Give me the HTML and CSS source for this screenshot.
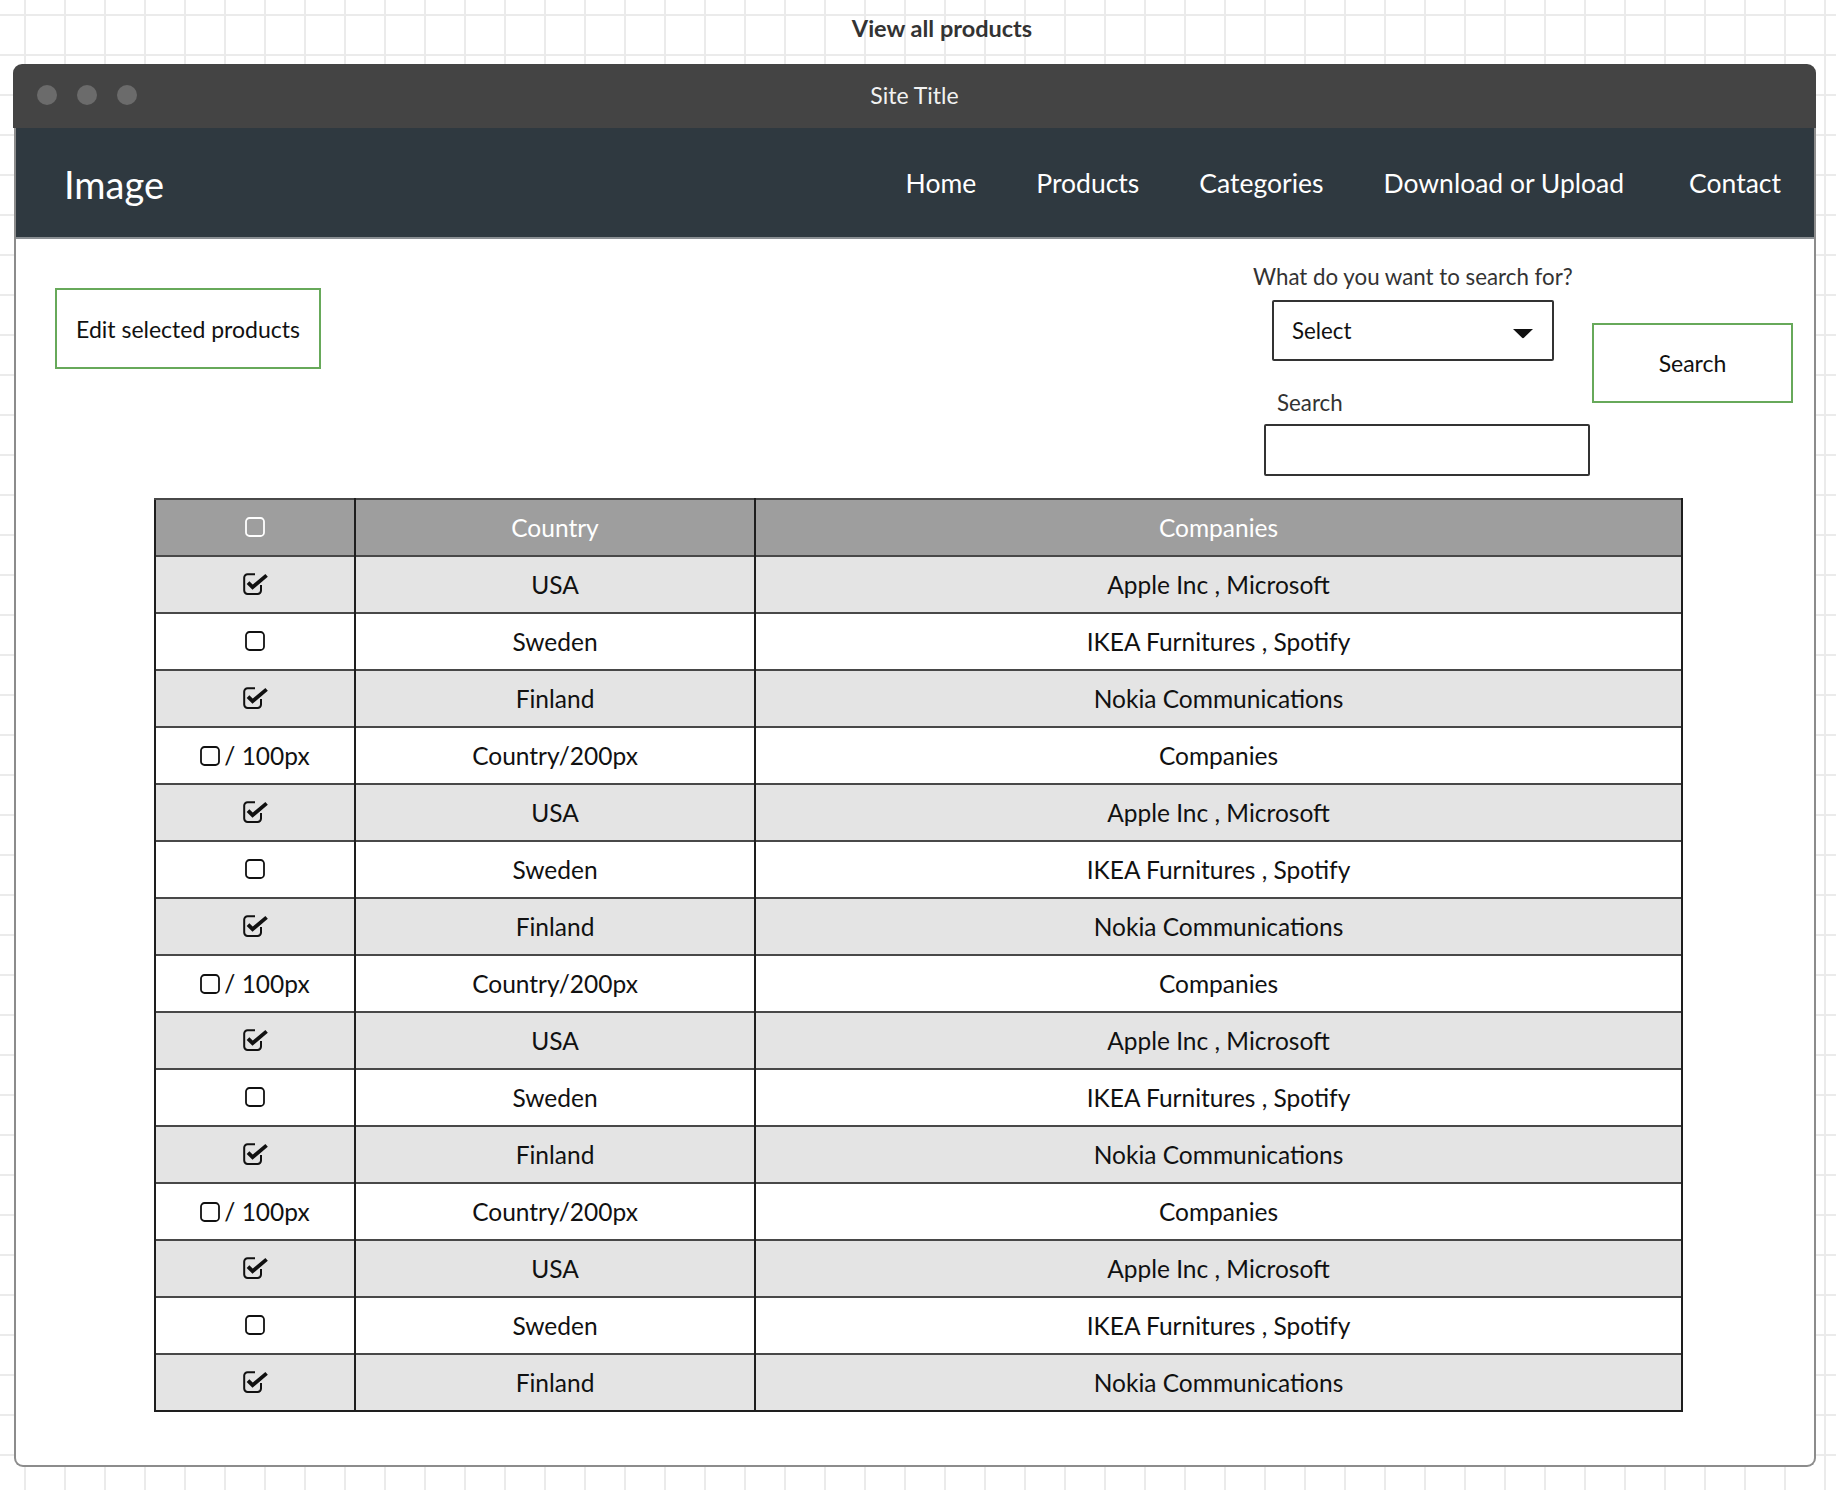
FILE: index.html
```html
<!DOCTYPE html>
<html lang="en">
<head>
<meta charset="utf-8">
<title>View all products</title>
<link rel="stylesheet" href="styles.css">
</head>
<body>
<svg class="defs" aria-hidden="true">
  <symbol id="i-box" viewBox="0 0 20 20">
    <rect x="1" y="1" width="18" height="18" rx="3.5" fill="none" stroke="currentColor" stroke-width="1.8"/>
  </symbol>
  <symbol id="i-check" viewBox="0 0 26 22">
    <path d="M12 1.2 H4.6 A3.4 3.4 0 0 0 1.2 4.6 V17.6 A3.4 3.4 0 0 0 4.6 21 H14.6 A3.4 3.4 0 0 0 18 17.6 V12" fill="none" stroke="currentColor" stroke-width="2"/>
    <path d="M5 9.6 L9.6 14.2 L23.6 2.4" fill="none" stroke="currentColor" stroke-width="3.8"/>
  </symbol>
</svg>

<div class="page-head"><span class="page-title">View all products</span></div>

<div class="window">
  <div class="titlebar">
    <div class="dots"><span class="dot"></span><span class="dot"></span><span class="dot"></span></div>
    <div class="site-title">Site Title</div>
    <div></div>
  </div>
  <div class="frame">
    <nav class="nav">
      <div class="logo">Image</div>
      <ul class="menu">
        <li>Home</li>
        <li>Products</li>
        <li>Categories</li>
        <li>Download or Upload</li>
        <li class="last">Contact</li>
      </ul>
    </nav>
    <main class="content">
      <div class="top-row">
        <button class="btn btn-edit">Edit selected products</button>
        <div class="search-area">
          <div class="search-fields">
            <div class="label-q">What do you want to search for?</div>
            <div class="select"><span>Select</span>
              <svg class="caret" viewBox="0 0 20 10"><path d="M0 0 H20 L11.2 8.6 Q10 9.8 8.8 8.6 Z" fill="#111"/></svg>
            </div>
            <div class="label-s">Search</div>
            <div class="input"></div>
          </div>
          <button class="btn btn-search">Search</button>
        </div>
      </div>

      <table class="grid">
        <colgroup><col class="c1"><col class="c2"><col class="c3"></colgroup>
        <thead>
          <tr><th><svg class="ic-box"><use href="#i-box"/></svg></th><th>Country</th><th>Companies</th></tr>
        </thead>
        <tbody>
          <tr class="alt"><td><svg class="ic-check"><use href="#i-check"/></svg></td><td>USA</td><td>Apple Inc , Microsoft</td></tr>
          <tr><td><svg class="ic-box"><use href="#i-box"/></svg></td><td>Sweden</td><td>IKEA Furnitures , Spotify</td></tr>
          <tr class="alt"><td><svg class="ic-check"><use href="#i-check"/></svg></td><td>Finland</td><td>Nokia Communications</td></tr>
          <tr><td><span class="px"><svg class="ic-box"><use href="#i-box"/></svg> / 100px</span></td><td>Country/200px</td><td>Companies</td></tr>
          <tr class="alt"><td><svg class="ic-check"><use href="#i-check"/></svg></td><td>USA</td><td>Apple Inc , Microsoft</td></tr>
          <tr><td><svg class="ic-box"><use href="#i-box"/></svg></td><td>Sweden</td><td>IKEA Furnitures , Spotify</td></tr>
          <tr class="alt"><td><svg class="ic-check"><use href="#i-check"/></svg></td><td>Finland</td><td>Nokia Communications</td></tr>
          <tr><td><span class="px"><svg class="ic-box"><use href="#i-box"/></svg> / 100px</span></td><td>Country/200px</td><td>Companies</td></tr>
          <tr class="alt"><td><svg class="ic-check"><use href="#i-check"/></svg></td><td>USA</td><td>Apple Inc , Microsoft</td></tr>
          <tr><td><svg class="ic-box"><use href="#i-box"/></svg></td><td>Sweden</td><td>IKEA Furnitures , Spotify</td></tr>
          <tr class="alt"><td><svg class="ic-check"><use href="#i-check"/></svg></td><td>Finland</td><td>Nokia Communications</td></tr>
          <tr><td><span class="px"><svg class="ic-box"><use href="#i-box"/></svg> / 100px</span></td><td>Country/200px</td><td>Companies</td></tr>
          <tr class="alt"><td><svg class="ic-check"><use href="#i-check"/></svg></td><td>USA</td><td>Apple Inc , Microsoft</td></tr>
          <tr><td><svg class="ic-box"><use href="#i-box"/></svg></td><td>Sweden</td><td>IKEA Furnitures , Spotify</td></tr>
          <tr class="alt"><td><svg class="ic-check"><use href="#i-check"/></svg></td><td>Finland</td><td>Nokia Communications</td></tr>
        </tbody>
      </table>
    </main>
  </div>
</div>
</body>
</html>
```

FILE: styles.css
```css
html, body {
  margin: 0;
  padding: 0;
}
body {
  min-height: 1490px;
  font-family: "Lato", "Open Sans", sans-serif;
  color: #111;
  background-color: #fff;
  background-image:
    linear-gradient(to right, #ebebeb 2px, transparent 2px),
    linear-gradient(to bottom, #ebebeb 2px, transparent 2px);
  background-size: 40px 40px;
  background-position: 24px 14px;
}
.defs {
  position: absolute;
  width: 0;
  height: 0;
  overflow: hidden;
}

/* heading above window */
.page-head {
  height: 64px;
  box-sizing: border-box;
  padding: 14px 0 0 48px;
  text-align: center;
}
.page-title {
  font-weight: 700;
  font-size: 23.5px;
  line-height: 28px;
  color: #333;
}

/* window */
.window {
  margin-left: 13px;
  width: 1803px;
}
.titlebar {
  height: 64px;
  background: #444444;
  border-radius: 9px 9px 0 0;
  display: grid;
  grid-template-columns: 1fr auto 1fr;
  align-items: center;
  padding: 0 0 2px 24px;
  box-sizing: border-box;
}
.dots {
  display: flex;
  gap: 20px;
}
.dot {
  width: 20px;
  height: 20px;
  border-radius: 50%;
  background: #6b6b6b;
}
.site-title {
  color: #f2f2f2;
  font-size: 23px;
  padding-right: 24px;
}
.frame {
  margin-left: 1px;
  border: 2px solid #8c8c8c;
  border-top: none;
  border-radius: 0 0 9px 9px;
  background: #fff;
}

/* nav */
.nav {
  height: 109px;
  background: #2f3940;
  border-bottom: 2px solid #8a8f93;
  display: flex;
  align-items: center;
  justify-content: space-between;
  padding: 0 33px 0 48px;
  color: #fff;
}
.logo {
  font-size: 38px;
  padding-top: 3px;
}
.menu {
  list-style: none;
  margin: 0;
  padding: 0;
  display: flex;
  gap: 60px;
  font-size: 26.5px;
}
.menu .last {
  margin-left: 5px;
}

/* content */
.content {
  padding: 24px 21px 53px 39px;
}
.top-row {
  display: flex;
  justify-content: space-between;
  align-items: flex-start;
}
.btn {
  font-family: inherit;
  font-size: 23px;
  color: #111;
  background: #fff;
  border: 2px solid #67a95a;
  box-sizing: border-box;
  padding: 0;
  display: flex;
  align-items: center;
  justify-content: center;
}
.btn-edit {
  margin-top: 25px;
  width: 266px;
  height: 81px;
}
.search-area {
  display: flex;
  align-items: flex-start;
}
.search-fields {
  display: flex;
  flex-direction: column;
  align-items: flex-start;
  width: 337px;
}
.label-q, .label-s {
  font-size: 22.3px;
  line-height: 28px;
  color: #333;
  white-space: nowrap;
}
.select {
  margin: 9px 0 0 19px;
  width: 282px;
  height: 61px;
  box-sizing: border-box;
  border: 2px solid #333;
  border-radius: 2px;
  padding: 0 19px 0 18px;
  display: flex;
  align-items: center;
  justify-content: space-between;
  font-size: 22.3px;
}
.caret {
  width: 20px;
  height: 10px;
  margin-top: 6px;
}
.label-s {
  margin: 28px 0 0 24px;
}
.input {
  margin: 7px 0 0 11px;
  width: 326px;
  height: 52px;
  box-sizing: border-box;
  border: 2px solid #333;
  border-radius: 2px;
}
.btn-search {
  margin: 60px 0 0 2px;
  width: 201px;
  height: 80px;
}

/* table */
.grid {
  margin: 22px 0 0 99px;
  width: 1529px;
  border-collapse: collapse;
  border: 2px solid #1e1e1e;
  table-layout: fixed;
  font-size: 24.5px;
}
.c1 { width: 200px; }
.c2 { width: 400px; }
.grid tr {
  height: 57px;
}
.grid th, .grid td {
  padding: 0;
  text-align: center;
  vertical-align: middle;
  border-left: 2px solid #1e1e1e;
  border-right: 2px solid #1e1e1e;
  border-top: 2px solid #484848;
}
.grid th {
  background: #9e9e9e;
  color: #fff;
  font-weight: 400;
}
.grid tbody tr {
  background: #fff;
}
.grid tbody tr.alt {
  background: #e4e4e4;
}
.ic-box {
  display: block;
  margin: 0 auto 2px;
  width: 20px;
  height: 20px;
  color: #111;
}
.grid th .ic-box {
  color: #fff;
}
.ic-check {
  display: block;
  margin: 0 auto 2px;
  width: 26px;
  height: 22px;
  color: #111;
  position: relative;
  left: 1px;
}
.px {
  display: flex;
  justify-content: center;
  align-items: center;
  gap: 4px;
}
.px .ic-box {
  margin: 0;
}
```
